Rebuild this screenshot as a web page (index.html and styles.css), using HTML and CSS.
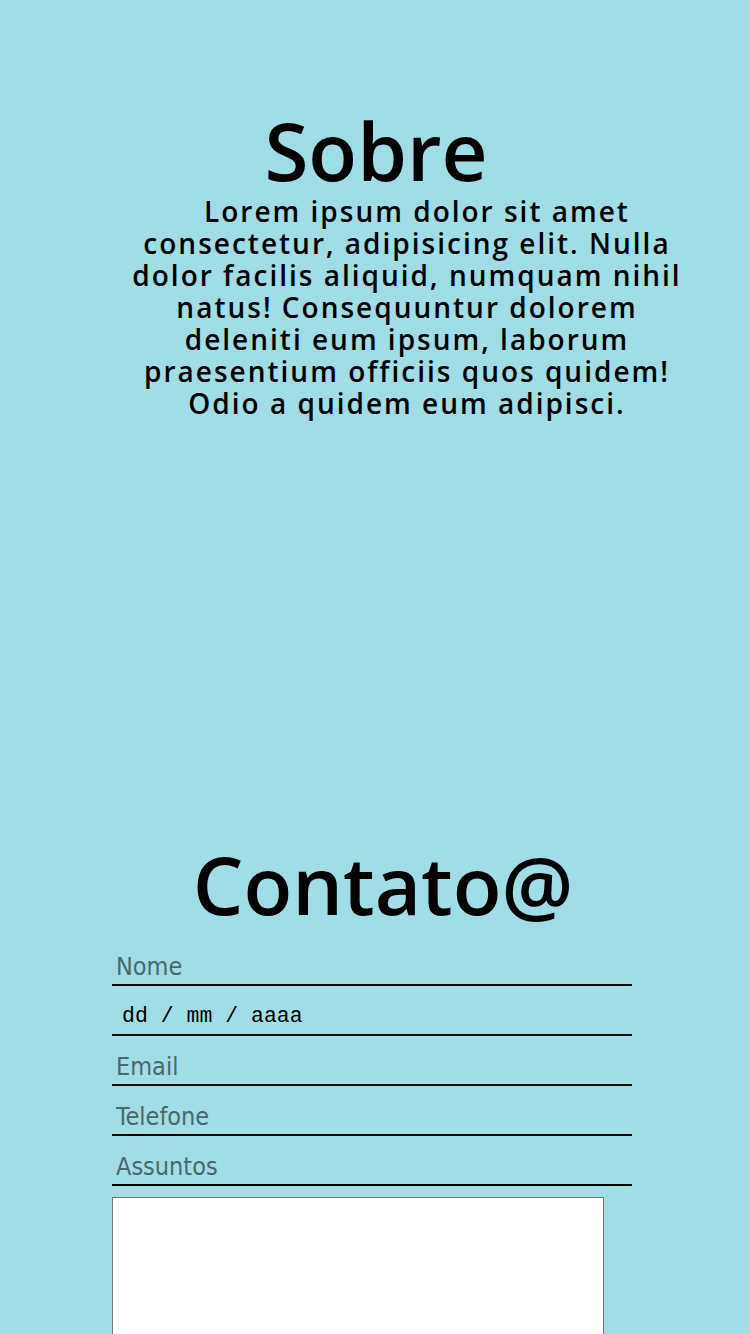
FILE: index.html
```html
<!DOCTYPE html>
<html lang="pt">
<head>
<meta charset="utf-8">
<title>Sobre</title>
<link rel="stylesheet" href="styles.css">
</head>
<body>
<section class="sobre">
  <h1 class="sobre-title">Sobre</h1>
  <p class="sobre-text">Lorem ipsum dolor sit amet consectetur, adipisicing elit. Nulla dolor facilis aliquid, numquam nihil natus! Consequuntur dolorem deleniti eum ipsum, laborum praesentium officiis quos quidem! Odio a quidem eum adipisci.</p>
</section>
<section class="contato">
  <h2 class="contato-title">Contato@</h2>
  <form class="form">
    <input class="field" type="text" placeholder="Nome">
    <input class="field field-date" type="text" placeholder="dd / mm / aaaa">
    <input class="field" type="text" placeholder="Email">
    <input class="field" type="text" placeholder="Telefone">
    <input class="field" type="text" placeholder="Assuntos">
    <textarea class="message"></textarea>
  </form>
</section>
</body>
</html>
```

FILE: styles.css
```css
html, body {
  margin: 0;
  padding: 0;
}
body {
  background: #a0dde6;
  font-family: "Open Sans", "Noto Sans", sans-serif;
  color: #000;
  width: 750px;
  height: 1334px;
  overflow: hidden;
}
.sobre {
  padding-top: 105px;
}
.sobre-title {
  margin: 0;
  font-size: 80px;
  font-weight: 600;
  line-height: 90px;
  text-align: center;
  padding-left: 2px;
}
.sobre-text {
  margin: 0 0 0 127px;
  width: 560px;
  font-size: 28px;
  font-weight: 600;
  line-height: 32px;
  letter-spacing: 2px;
  text-align: center;
  text-indent: 20px;
}
.contato {
  margin-top: 413px;
}
.contato-title {
  margin: 0;
  font-size: 80px;
  font-weight: 600;
  line-height: 104px;
  text-align: center;
  padding-left: 16px;
}
.form {
  display: flex;
  flex-direction: column;
  padding-left: 112px;
}
.field {
  display: block;
  box-sizing: border-box;
  width: 520px;
  height: 50px;
  margin: 0;
  padding: 12px 4px 0;
  border: none;
  border-bottom: 2px solid #000;
  background: transparent;
  font-family: "DejaVu Sans Condensed", "DejaVu Sans", sans-serif;
  font-size: 25px;
  color: #000;
  outline: none;
}
.field::placeholder {
  color: #4a686c;
  opacity: 1;
}
.field-date {
  font-family: "Liberation Mono", monospace;
  font-size: 21.5px;
  padding-left: 10px;
}
.field-date::placeholder {
  color: #000;
}
.message {
  display: block;
  box-sizing: border-box;
  width: 492px;
  height: 200px;
  margin: 11px 0 0;
  border: 1px solid #767676;
  background: #fff;
  resize: none;
}
```
